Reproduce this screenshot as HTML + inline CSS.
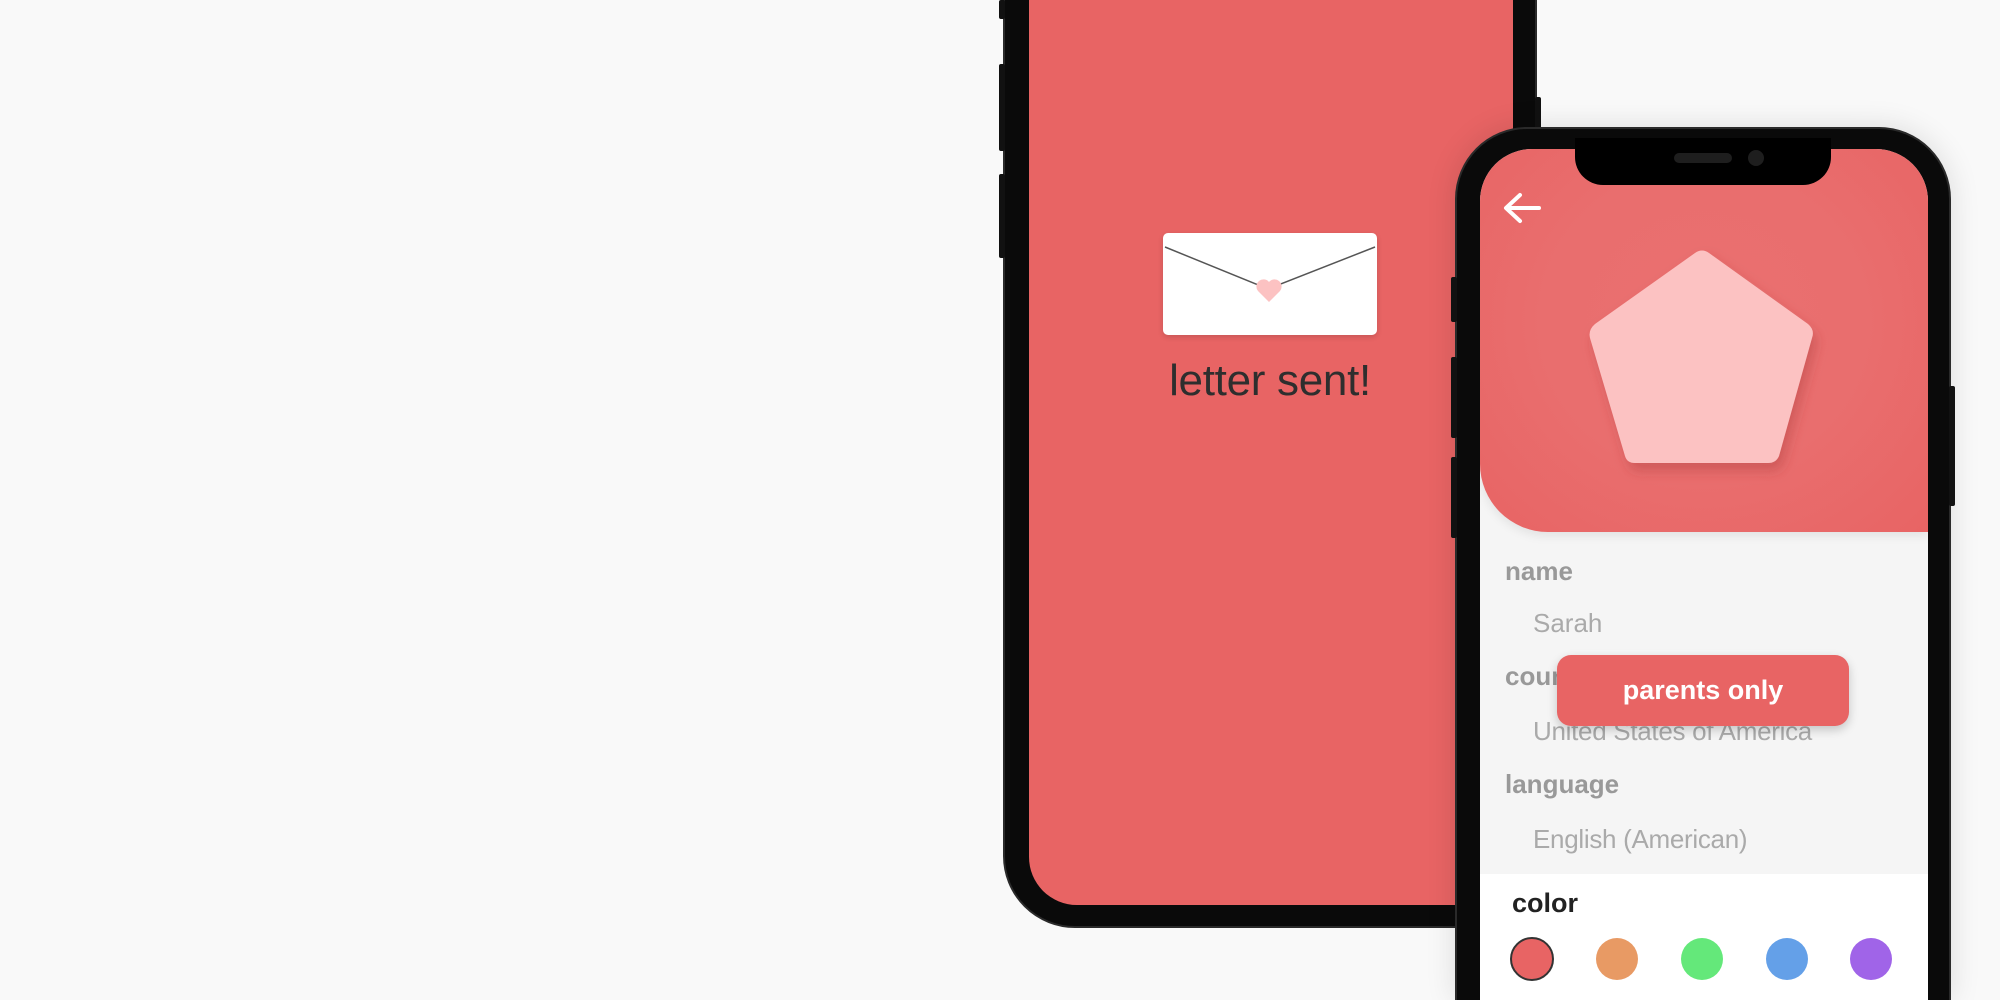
<!DOCTYPE html>
<html><head><meta charset="utf-8"><style>
*{margin:0;padding:0;box-sizing:border-box}
html{width:2000px;height:1000px;overflow:hidden}
body{width:2000px;height:1000px;background:#f9f9f9;position:relative;overflow:hidden;font-family:"Liberation Sans",sans-serif}
.a{position:absolute}
.btn{background:#111;position:absolute;border-radius:2px}
</style></head><body>
<!-- left phone -->
<div class="a" style="left:1003px;top:-80px;width:534px;height:1008px;background:#0a0a0a;border-radius:72px;border:2px solid #2a2a2a"></div>
<div class="btn" style="left:999px;top:0;width:6px;height:19px"></div>
<div class="btn" style="left:999px;top:64px;width:6px;height:87px"></div>
<div class="btn" style="left:999px;top:174px;width:6px;height:84px"></div>
<div class="btn" style="left:1535px;top:97px;width:6px;height:32px"></div>
<div class="a" style="left:1029px;top:-60px;width:484px;height:965px;background:#e86464;border-radius:48px"></div>
<!-- envelope -->
<div class="a" style="left:1163px;top:233px;width:214px;height:102px;background:#fff;border-radius:5px;box-shadow:0 2px 6px rgba(0,0,0,.15)">
<svg width="214" height="102" style="position:absolute;left:0;top:0">
<polyline points="2,14 105,56 212,14" fill="none" stroke="#555" stroke-width="1.5"/>
<path d="M106 69 L95 58 A7 7 0 0 1 106 49 A7 7 0 0 1 117 58 Z" fill="#fcc2c2"/>
</svg></div>
<div class="a" style="left:1130px;top:356px;width:280px;text-align:center;font-size:44px;color:#2e2e2e;letter-spacing:-0.3px">letter sent!</div>
<!-- right phone -->
<div class="a" style="left:1455px;top:127px;width:496px;height:873px;background:#0a0a0a;border-radius:72px 72px 0 0;border:2px solid #2a2a2a;border-bottom:0;box-shadow:0 0 30px rgba(0,0,0,.12)"></div>
<div class="btn" style="left:1451px;top:277px;width:6px;height:45px"></div>
<div class="btn" style="left:1451px;top:357px;width:6px;height:81px"></div>
<div class="btn" style="left:1451px;top:457px;width:6px;height:81px"></div>
<div class="btn" style="left:1949px;top:386px;width:6px;height:120px"></div>
<div class="a" style="left:1480px;top:149px;width:448px;height:851px;background:#f5f5f5;border-radius:52px 52px 0 0;overflow:hidden">
 <div class="a" style="left:0;top:0;width:448px;height:383px;background:radial-gradient(ellipse at 50% 45%,#ea7070 0%,#e96e6e 50%,#e86464 100%);border-bottom-left-radius:68px;box-shadow:0 4px 10px rgba(0,0,0,.08)"></div>
 <div class="a" style="left:0;top:725px;width:448px;height:126px;background:#fff"></div>
</div>
<!-- notch -->
<div class="a" style="left:1575px;top:138px;width:256px;height:47px;background:#000;border-radius:0 0 28px 28px"></div>
<div class="a" style="left:1674px;top:153px;width:58px;height:10px;background:#1e1e1e;border-radius:5px"></div>
<div class="a" style="left:1748px;top:150px;width:16px;height:16px;background:#1e1e1e;border-radius:50%"></div>
<!-- back arrow -->
<svg class="a" style="left:1500px;top:188px" width="44" height="40"><path d="M39 20 H7 M20 7 L6 20 L20 33" fill="none" stroke="#fff" stroke-width="4" stroke-linecap="round" stroke-linejoin="round"/></svg>
<!-- pentagon -->
<svg class="a" style="left:1580px;top:238px" width="250" height="250">
<defs><filter id="s" x="-20%" y="-20%" width="140%" height="140%"><feDropShadow dx="4" dy="8" stdDeviation="6" flood-color="#a03030" flood-opacity=".35"/></filter></defs>
<path d="M115 15 Q122 10 129 15 L228 86 Q235 92 232 100 L199 218 Q196 225 188 225 L55 225 Q47 225 45 218 L10 100 Q8 92 15 86 Z" fill="#fcc2c2" filter="url(#s)"/>
</svg>
<!-- form -->
<div class="a" style="left:1505px;top:556px;font-size:26px;font-weight:bold;color:#999">name</div>
<div class="a" style="left:1533px;top:608px;font-size:26px;color:#aaa">Sarah</div>
<div class="a" style="left:1505px;top:661px;font-size:26px;font-weight:bold;color:#999">country</div>
<div class="a" style="left:1533px;top:716px;font-size:26px;color:#aaa;letter-spacing:-.3px">United States of America</div>
<div class="a" style="left:1505px;top:769px;font-size:26px;font-weight:bold;color:#999">language</div>
<div class="a" style="left:1533px;top:824px;font-size:26px;color:#aaa;letter-spacing:-.3px">English (American)</div>
<div class="a" style="left:1557px;top:655px;width:292px;height:71px;background:#e86464;border-radius:14px;box-shadow:0 4px 10px rgba(0,0,0,.2);color:#fff;font-size:27px;font-weight:bold;text-align:center;line-height:71px">parents only</div>
<div class="a" style="left:1512px;top:888px;font-size:27px;font-weight:bold;color:#222">color</div>
<div class="a" style="left:1510px;top:937px;width:44px;height:44px;border-radius:50%;background:#e86464;border:2px solid #333"></div>
<div class="a" style="left:1596px;top:938px;width:42px;height:42px;border-radius:50%;background:#e89a64"></div>
<div class="a" style="left:1681px;top:938px;width:42px;height:42px;border-radius:50%;background:#64e87a"></div>
<div class="a" style="left:1766px;top:938px;width:42px;height:42px;border-radius:50%;background:#64a0e8"></div>
<div class="a" style="left:1850px;top:938px;width:42px;height:42px;border-radius:50%;background:#a064e8"></div>
</body></html>
